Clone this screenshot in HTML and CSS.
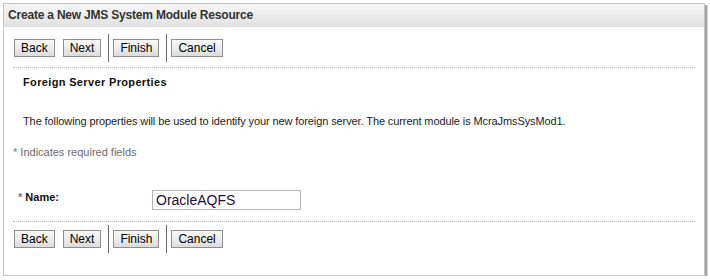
FILE: index.html
```html
<!DOCTYPE html>
<html>
<head>
    <title>Create a New JMS System Module Resource</title>
    <link rel="stylesheet" href="styles.css">
</head>
<body>

<div class="panel">
    <div class="panel-head">Create a New JMS System Module Resource</div>

    <div class="toolbar">
        <button class="btn">Back</button>
        <button class="btn">Next</button>
        <span class="sep"></span>
        <button class="btn">Finish</button>
        <span class="sep"></span>
        <button class="btn">Cancel</button>
    </div>

    <div class="content">
        <h3 class="section-title">Foreign Server Properties</h3>
        <p class="intro">The following properties will be used to identify your new foreign server. The current module is McraJmsSysMod1.</p>
    </div>

    <div class="required-note"><span class="star">*</span> Indicates required fields</div>

    <div class="field-row">
        <label class="field-label" for="name"><span class="star">*</span> Name:</label>
        <input class="field-input" id="name" type="text" value="OracleAQFS">
    </div>

    <div class="toolbar toolbar-bottom">
        <button class="btn">Back</button>
        <button class="btn">Next</button>
        <span class="sep"></span>
        <button class="btn">Finish</button>
        <span class="sep"></span>
        <button class="btn">Cancel</button>
    </div>
</div>

</body>
</html>
```

FILE: styles.css
```css
body {
    margin: 0;
    padding: 3px 0 0 3px;
    background: #ffffff;
    font-family: "Liberation Sans", Arial, sans-serif;
    font-size: 11px;
    color: #222;
}
.panel {
    width: 700px;
    height: 271px;
    border: 1px solid #c4c4c4;
    box-shadow: 2px 2px 0 #a3a3a3, 3px 3px 0 #d8d8d8;
    background: #fff;
}
.panel-head {
    height: 22px;
    line-height: 22px;
    padding-left: 4px;
    font-size: 12px;
    font-weight: bold;
    letter-spacing: -0.2px;
    color: #333;
    background: linear-gradient(#f6f6f6, #eeeeee 45%, #e6e6e6 80%, #e1e1e1);
    border-bottom: 1px solid #e0e0e0;
}
.toolbar {
    display: flex;
    align-items: center;
    margin: 0 9px;
    padding: 7px 0 5px 1px;
    border-bottom: 1px dotted #b8b8b8;
}
.toolbar-bottom {
    border-bottom: none;
    padding-top: 3px;
}
.btn {
    height: 18px;
    padding: 0 6px;
    margin: 0 8px 0 0;
    font-family: "Liberation Sans", Arial, sans-serif;
    font-size: 12px;
    line-height: 16px;
    color: #000;
    background: linear-gradient(#f8f8f8, #ececec 50%, #dcdcdc);
    border: 1px solid #8e8e8e;
    border-radius: 0;
}
.sep {
    width: 1px;
    height: 28px;
    background: #6a6a6a;
    margin: 0 4px 0 -1px;
}
.content {
    padding: 0 19px;
}
.section-title {
    margin: 7px 0 0;
    font-size: 11px;
    font-weight: bold;
    letter-spacing: 0.35px;
    color: #111;
    line-height: 14px;
}
.intro {
    margin: 25px 0 0;
    line-height: 14px;
    letter-spacing: -0.1px;
    color: #222;
}
.required-note {
    margin: 17px 0 0 9px;
    line-height: 14px;
    color: #6b6b6b;
}
.star {
    color: #6b7b8c;
}
.field-row {
    display: flex;
    align-items: flex-start;
    margin: 31px 9px 0;
    padding: 0 0 11px 5px;
    border-bottom: 1px dotted #b8b8b8;
}
.field-label {
    width: 134px;
    font-weight: bold;
    color: #111;
    line-height: 14px;
}
.field-input {
    width: 141px;
    height: 16px;
    padding: 1px 3px;
    margin: 0;
    border: 1px solid #b4b4b4;
    font-family: "Liberation Sans", Arial, sans-serif;
    font-size: 14px;
    color: #2a0a3a;
}
```
